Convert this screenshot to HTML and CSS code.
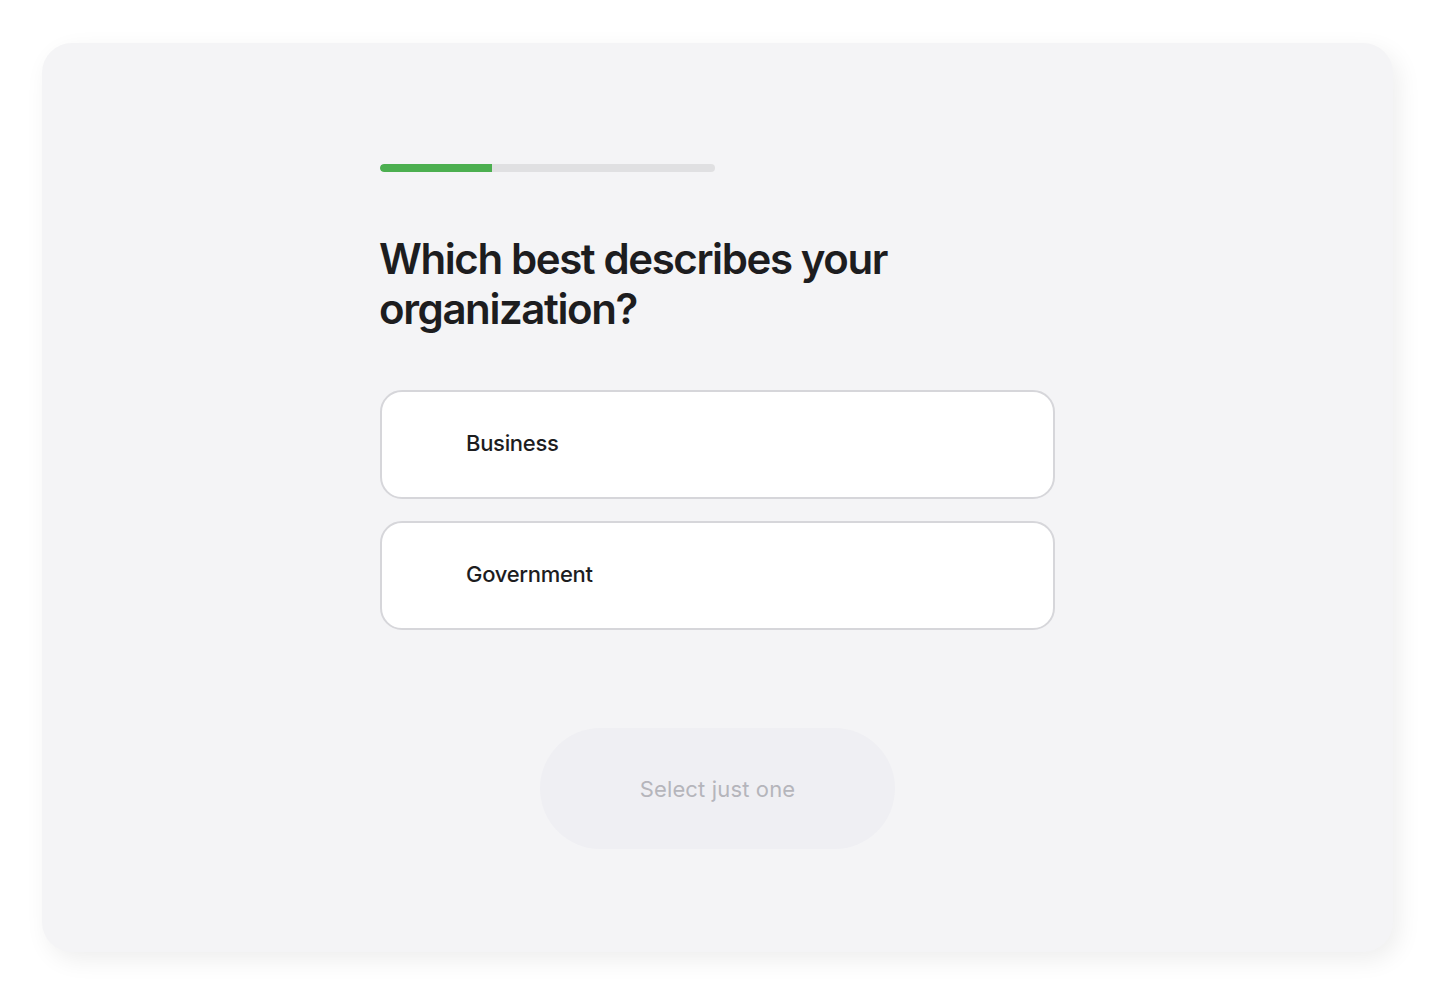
FILE: index.html
```html
<!DOCTYPE html>
<html lang="en">
<head>
<meta charset="utf-8">
<title>Organization type</title>
<link rel="stylesheet" href="styles.css">
</head>
<body>
<main class="card">
  <div class="content">
    <div class="progress"><div class="progress-fill" style="width:33.3%"></div></div>
    <h1 class="title">Which best describes your organization?</h1>
    <div class="options">
      <button class="option" type="button">Business</button>
      <button class="option" type="button">Government</button>
    </div>
    <div class="actions">
      <button class="submit" type="button" disabled>Select just one</button>
    </div>
  </div>
</main>
</body>
</html>
```
FILE: styles.css
```css
html, body {
  margin: 0;
  padding: 0;
  background: #ffffff;
}
body {
  font-family: Inter, "Noto Sans", sans-serif;
  color: #1d1d1f;
  padding: 43px 63px 48px 42px;
}
.card {
  box-sizing: border-box;
  width: 1351px;
  height: 909px;
  background: #f4f4f6;
  border-radius: 30px;
  box-shadow: 6px 8px 24px rgba(0, 0, 0, 0.07);
  padding-top: 121px;
  display: flex;
  justify-content: center;
}
.content {
  width: 675px;
  display: flex;
  flex-direction: column;
}
.progress {
  width: 335px;
  height: 8px;
  background: #e0e0e2;
  border-radius: 4px;
  overflow: hidden;
}
.progress-fill {
  height: 100%;
  background: #4caf50;
  border-radius: 4px 0 0 4px;
}
.title {
  margin: 62px 0 0 -1px;
  width: 540px;
  font-size: 42px;
  line-height: 50px;
  font-weight: 600;
  letter-spacing: -1.4px;
  color: #1d1d1f;
}
.options {
  margin-top: 56px;
  display: flex;
  flex-direction: column;
  gap: 22px;
}
.option {
  box-sizing: border-box;
  height: 109px;
  width: 100%;
  background: #ffffff;
  border: 2px solid #d6d6da;
  border-radius: 22px;
  padding: 0 0 4px 84px;
  text-align: left;
  font-family: Inter, "Noto Sans", sans-serif;
  font-size: 22px;
  font-weight: 500;
  letter-spacing: -0.3px;
  color: #1d1d1f;
}
.actions {
  margin-top: 98px;
  display: flex;
  justify-content: center;
}
.submit {
  width: 355px;
  height: 121px;
  border: none;
  border-radius: 61px;
  background: #efeff3;
  font-family: Inter, "Noto Sans", sans-serif;
  font-size: 22px;
  font-weight: 400;
  color: #b5b5bb;
  letter-spacing: 0.15px;
}
```
